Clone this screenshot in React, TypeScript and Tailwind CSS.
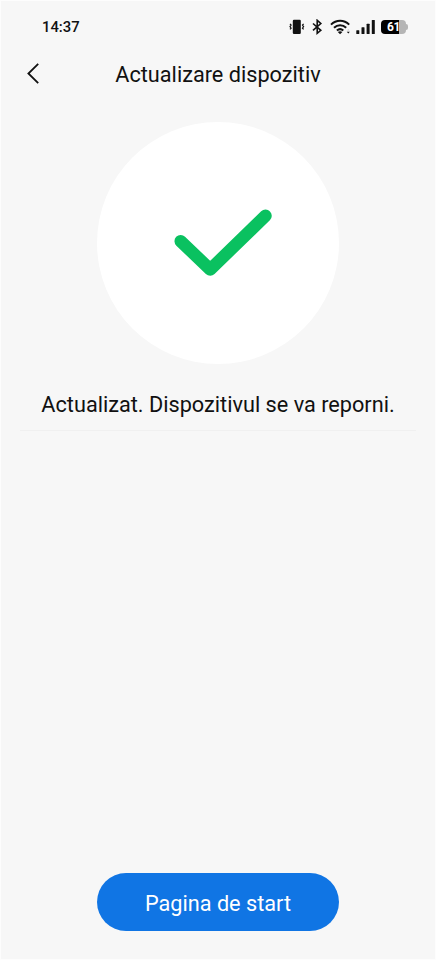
import React from 'react';

const StatusBar = () => {
  return (
    <div className="flex h-[50px] items-center justify-between pl-[41px] pr-[27px] pt-0.5">
      <span className="text-[14.8px] font-medium leading-none">14:37</span>

      <div className="flex items-center">
        {/* Vibrate */}
        <svg className="h-4 w-4" viewBox="0 0 16 16" fill="none">
          <rect x="3.8" y="0.7" width="8" height="14.2" rx="1.2" fill="#111" />
          <path d="M1 4.8l1.1 1.3L1 7.6l1.1 1.5L1 10.4M14.6 4.8l-1.1 1.3 1.1 1.5-1.1 1.5 1.1 1.3" stroke="#111" strokeWidth="1.2" />
        </svg>

        {/* Bluetooth */}
        <svg className="ml-[7px] h-4 w-[11px]" viewBox="0 0 11 16" fill="none">
          <path d="M1 4.5l7.8 6.8-3.6 3V1.3l3.6 3.2L1 11.3" stroke="#111" strokeWidth="1.6" />
        </svg>

        {/* Wifi */}
        <svg className="ml-[7px] h-4 w-[21px]" viewBox="0 0 21 16" fill="none">
          <path d="M1 5.6C6.2.4 14 .4 19.2 5.6M4 8.7c3.500-3.400 8.700-3.400 12.200 0M6.900 11.600c1.900-1.700 4.500-1.700 6.400 0" stroke="#111" strokeWidth="2" />
          <path d="M7.8 12.9c1.300-1 3.300-1 4.600 0l-2.300 2.400z" fill="#111" />
          <path d="M16.8 12.8h3l-1.500 1.700z" fill="#111" />
          <path d="M17 11.4h2.600l-1.300-1.300z" fill="#ccc" />
        </svg>

        {/* Signal */}
        <svg className="ml-[5px] h-4 w-5" viewBox="0 0 20 16" fill="#111">
          <rect x="0.3" y="11.3" width="3" height="3.7" rx="0.5" />
          <rect x="5.5" y="8.2" width="3" height="6.8" rx="0.5" />
          <rect x="10.6" y="4.8" width="3" height="10.2" rx="0.5" />
          <rect x="15.8" y="0.9" width="3" height="14.1" rx="0.5" />
        </svg>

        {/* Battery */}
        <div className="ml-[5px] flex items-center">
          <div className="flex h-[14px] w-[25px] items-center rounded-[4px] bg-[linear-gradient(90deg,#000_70%,#b5b5b5_70%)] pl-[6px]">
            <span className="text-[12px] font-bold leading-none tracking-[-0.5px] text-white">61</span>
          </div>
          <div className="h-[6px] w-[2px] rounded-r-full bg-[#b5b5b5]" />
        </div>
      </div>
    </div>
  );
};

const Header = () => {
  return (
    <header className="grid h-[46px] grid-cols-[72px_1fr_72px] items-center">
      <button className="flex h-full items-center pl-[26px]" aria-label="Înapoi">
        <svg className="h-[22px] w-3" viewBox="0 0 12 22" fill="none">
          <path d="M11.2 0.8L1.4 10.5l9.8 9.7" stroke="#111" strokeWidth="1.8" />
        </svg>
      </button>
      <h1 className="whitespace-nowrap pt-0.5 text-center text-[21.7px] leading-none">Actualizare dispozitiv</h1>
    </header>
  );
};

const App = () => {
  return (
    <div className="flex h-[960px] w-[436px] flex-col overflow-hidden border border-[#fdfdfd] bg-[#f7f7f7] font-[Roboto,sans-serif] text-[#111]">
      <StatusBar />
      <Header />

      <main className="flex flex-1 flex-col items-center pt-[25px]">
        <div className="h-[242px] w-[242px] rounded-full bg-white">
          <svg className="h-full w-full" viewBox="0 0 242 242" fill="none">
            <path
              d="M83.7 119.2L113.2 147.5L168.5 93.8"
              stroke="#0ac160"
              strokeWidth="12.5"
              strokeLinecap="round"
              strokeLinejoin="round"
            />
          </svg>
        </div>

        <div className="mt-[17px] flex h-[50px] w-[396px] items-center justify-center border-b border-[#f0f0f0] pb-0.5">
          <p className="whitespace-nowrap text-[21.7px] leading-none">Actualizat. Dispozitivul se va reporni.</p>
        </div>
      </main>

      <footer className="flex justify-center pb-[28px]">
        <button className="h-[58px] w-[242px] rounded-full bg-[#1075e4] pt-1 text-[21.7px] leading-none text-white">
          Pagina de start
        </button>
      </footer>
    </div>
  );
};

export default App;
